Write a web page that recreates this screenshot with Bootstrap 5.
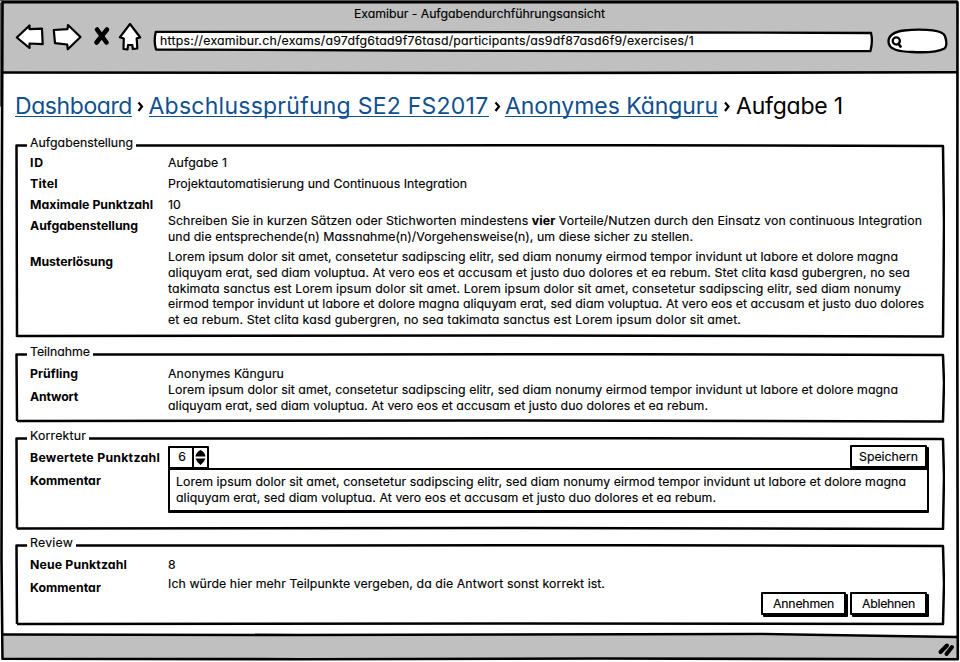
<!DOCTYPE html>
<html lang="de">
<head>
<meta charset="utf-8">
<title>Examibur - Aufgabendurchführungsansicht</title>
<link href="https://cdn.jsdelivr.net/npm/bootstrap@5.3.0/dist/css/bootstrap.min.css" rel="stylesheet">
<style>
html,body{height:662px;overflow:hidden}
body{font:12.3px/16px Inter,"Open Sans",sans-serif;font-feature-settings:"cv11";color:#000;background:#fff;-webkit-text-stroke:.15px}
.fit{white-space:nowrap;display:inline-block}
.ln{display:block;width:max-content;white-space:nowrap}
.browser{width:960px;height:662px;display:flow-root}
.sketch-lines{left:0;top:0;pointer-events:none;z-index:3;-webkit-text-stroke:0}
.chrome-bar{height:71px;margin:2px 2px 0 3px;background:#c0c0c0}
.win-title{height:24px;line-height:24px;padding:0 2px 0 0}
.address{position:relative;z-index:4;margin:8px 0 0 157px;height:14px;line-height:14px}
.page-body{height:562px;padding:21px 15px 0 12px;margin:0 3px}
.foot-bar{height:23px;background:#c0c0c0;margin:0 2px 0 4px}
.crumbs{font-size:23px;line-height:28px;height:28px;-webkit-text-stroke:0}
.crumbs a{color:#105090;text-decoration:none;border-bottom:1px solid #105090;height:23px;line-height:24px;display:block}
.crumb-here{line-height:24px}
.panel{position:relative;width:930px;padding:0 15px}
.frame{position:absolute;inset:0;width:100%;height:100%}
.frame path{fill:none;stroke:#000;stroke-width:2.5px;vector-effect:non-scaling-stroke;stroke-linejoin:round}
.panel-title{position:absolute;left:12px;top:-9px;background:#fff;padding:0 3px;height:18px;line-height:16px}
.item{display:flex;position:relative}
.item dt{width:138px;flex:none;font-weight:700;line-height:16px;-webkit-text-stroke:0}
.item dd{margin:0;flex:1 1 auto}
.lorem{line-height:15.75px}
.p1{height:194px;padding-top:11px;margin-top:22px}
.p2{height:70px;padding-top:13px;margin-top:15px}
.p3{height:93px;padding-top:8px;margin-top:14px}
.p4{height:82px;padding-top:13px;margin-top:14px}
.h21{height:21px}.h16{height:16px}.h19{height:19px}.h23{height:23px}
.push4{padding-top:4px}.push5{padding-top:5px}.push7{padding-top:7px}
.sk-btn{font:inherit;border:2px solid #000;background:#fff;border-radius:1px;box-shadow:2px 2px 0 #000;padding:0;height:23px;line-height:18px;text-align:center;color:#000;-webkit-text-stroke:inherit}
.w78{width:77px;margin-right:3px}.w85{width:85px;margin-right:4px}
.stepper{width:41px;height:23px;margin-top:1px;border:2px solid #000;border-radius:1px}
.stepper-num{width:24px;line-height:17px;border-right:2px solid #000;text-align:center;padding-left:2px}
.comment-box{border:2px solid #000;border-bottom-width:3px;width:761px;height:45px;padding:4px 6px;border-radius:1px}
</style>
<script src="https://cdn.jsdelivr.net/npm/bootstrap@5.3.0/dist/js/bootstrap.bundle.min.js"></script>
</head>
<body>
<div class="browser position-relative">
<header class="chrome-bar">
  <div class="win-title text-center"><span class="fit" data-w="251">Examibur - Aufgabendurchführungsansicht</span></div>
  <div class="d-flex">
    <div class="address"><span class="fit" data-w="534">https://examibur.ch/exams/a97dfg6tad9f76tasd/participants/as9df87asd6f9/exercises/1</span></div>
  </div>
</header>
<main class="page-body">
  <nav class="crumbs d-flex align-items-start">
    <a href="#"><span class="fit" data-w="117">Dashboard</span></a>
    <svg width="16.500" height="24"><path d="M6.500 8.500 10 12.500 6.500 17" fill="none" stroke="#000" stroke-width="2.200"/></svg>
    <a href="#"><span class="fit" data-w="340">Abschlussprüfung SE2 FS2017</span></a>
    <svg width="16.500" height="24"><path d="M6.500 8.500 10 12.500 6.500 17" fill="none" stroke="#000" stroke-width="2.200"/></svg>
    <a href="#"><span class="fit" data-w="213">Anonymes Känguru</span></a>
    <svg width="18" height="24"><path d="M7 8.500 10.500 12.500 7 17" fill="none" stroke="#000" stroke-width="2.200"/></svg>
    <span class="fit crumb-here" data-w="107">Aufgabe 1</span>
  </nav>

  <section class="panel p1">
    <svg class="frame" viewBox="0 0 930 195" preserveAspectRatio="none"><path d="M2 194 1.500 1.500 300 1.500 600 1.200 928 2 929 80 928 193.500 500 192.500 2 193"/></svg>
    <div class="panel-title"><span class="fit" data-w="103">Aufgabenstellung</span></div>
    <dl class="m-0">
      <div class="item h21"><dt><span class="fit" data-w="14">ID</span></dt><dd><span class="fit" data-w="59">Aufgabe 1</span></dd></div>
      <div class="item h21"><dt><span class="fit" data-w="28">Titel</span></dt><dd><span class="fit" data-w="299">Projektautomatisierung und Continuous Integration</span></dd></div>
      <div class="item h16"><dt><span class="fit" data-w="123">Maximale Punktzahl</span></dt><dd><span class="fit" data-w="13">10</span></dd></div>
      <div class="item mb-1"><dt class="push5"><span class="fit" data-w="108">Aufgabenstellung</span></dt><dd><span class="ln" data-w="754">Schreiben Sie in kurzen Sätzen oder Stichworten mindestens <b>vier</b> Vorteile/Nutzen durch den Einsatz von continuous Integration</span><span class="ln" data-w="525">und die entsprechende(n) Massnahme(n)/Vorgehensweise(n), um diese sicher zu stellen.</span></dd></div>
      <div class="item"><dt class="push5"><span class="fit" data-w="83">Musterlösung</span></dt><dd class="lorem"><span class="ln" data-w="730">Lorem ipsum dolor sit amet, consetetur sadipscing elitr, sed diam nonumy eirmod tempor invidunt ut labore et dolore magna</span><span class="ln" data-w="742">aliquyam erat, sed diam voluptua. At vero eos et accusam et justo duo dolores et ea rebum. Stet clita kasd gubergren, no sea</span><span class="ln" data-w="733">takimata sanctus est Lorem ipsum dolor sit amet. Lorem ipsum dolor sit amet, consetetur sadipscing elitr, sed diam nonumy</span><span class="ln" data-w="756">eirmod tempor invidunt ut labore et dolore magna aliquyam erat, sed diam voluptua. At vero eos et accusam et justo duo dolores</span><span class="ln" data-w="573">et ea rebum. Stet clita kasd gubergren, no sea takimata sanctus est Lorem ipsum dolor sit amet.</span></dd></div>
    </dl>
  </section>

  <section class="panel p2">
    <svg class="frame" viewBox="0 0 930 70" preserveAspectRatio="none"><path d="M2 68 1.500 1.500 300 1.500 600 1.200 928 2 929 30 928 68.500 500 67.500 2 68"/></svg>
    <div class="panel-title"><span class="fit" data-w="60">Teilnahme</span></div>
    <dl class="m-0">
      <div class="item h16"><dt><span class="fit" data-w="48">Prüfling</span></dt><dd><span class="fit" data-w="116">Anonymes Känguru</span></dd></div>
      <div class="item"><dt class="push7"><span class="fit" data-w="48">Antwort</span></dt><dd class="lorem"><span class="ln" data-w="730">Lorem ipsum dolor sit amet, consetetur sadipscing elitr, sed diam nonumy eirmod tempor invidunt ut labore et dolore magna</span><span class="ln" data-w="540">aliquyam erat, sed diam voluptua. At vero eos et accusam et justo duo dolores et ea rebum.</span></dd></div>
    </dl>
  </section>

  <section class="panel p3">
    <svg class="frame" viewBox="0 0 930 93" preserveAspectRatio="none"><path d="M2 91.500 1.500 1.500 300 1.500 600 1.200 928 2 929 40 928 92 500 91 2 91.500"/></svg>
    <div class="panel-title"><span class="fit" data-w="56">Korrektur</span></div>
    <dl class="m-0">
      <div class="item h23"><dt class="push5"><span class="fit" data-w="130">Bewertete Punktzahl</span></dt>
        <dd class="d-flex justify-content-between"><div class="stepper d-flex"><span class="stepper-num">6</span><svg width="13" height="19"><path d="M1.500 8.500Q2 4 6.500 2 11 4 11.500 8.500ZM1.500 10.500H11.500Q10 14.500 6.500 17 3 14.500 1.500 10.500Z"/></svg></div>
        <button class="sk-btn w78"><span class="fit" data-w="59">Speichern</span></button></dd></div>
      <div class="item"><dt class="push5"><span class="fit" data-w="71">Kommentar</span></dt><dd><div class="comment-box lorem"><span class="ln" data-w="730">Lorem ipsum dolor sit amet, consetetur sadipscing elitr, sed diam nonumy eirmod tempor invidunt ut labore et dolore magna</span><span class="ln" data-w="540">aliquyam erat, sed diam voluptua. At vero eos et accusam et justo duo dolores et ea rebum.</span></div></dd></div>
    </dl>
  </section>

  <section class="panel p4">
    <svg class="frame" viewBox="0 0 930 83" preserveAspectRatio="none"><path d="M2 81 1.500 1.500 300 1.500 600 1.200 928 2 929 40 928 81 500 80.500 2 81"/></svg>
    <div class="panel-title"><span class="fit" data-w="43">Review</span></div>
    <dl class="m-0">
      <div class="item h19"><dt><span class="fit" data-w="97">Neue Punktzahl</span></dt><dd><span class="fit" data-w="7">8</span></dd></div>
      <div class="item h16"><dt class="push4"><span class="fit" data-w="71">Kommentar</span></dt><dd><span class="fit" data-w="437">Ich würde hier mehr Teilpunkte vergeben, da die Antwort sonst korrekt ist.</span></dd></div>
    </dl>
    <div class="d-flex justify-content-end position-relative"><button class="sk-btn w85"><span class="fit" data-w="61">Annehmen</span></button><button class="sk-btn w78"><span class="fit" data-w="53">Ablehnen</span></button></div>
  </section>
</main>
<footer class="foot-bar"></footer>

<svg class="sketch-lines position-absolute" width="960" height="662" fill="none" stroke="#000" stroke-linejoin="round" stroke-linecap="round">
  <path stroke="#555" stroke-width="1.500" d="M.800 3V106M0 .500H957"/>
  <path stroke-width="2.600" d="M2.500 2.200H957.500L957.300 330 957.800 659.300 600 658.500 300 659.200 2.500 658.700 1.500 560 2 330 1.800 200 2.500 2"/>
  <path stroke-width="2.600" d="M3 72.500 480 73 957 72.300"/>
  <path stroke="none" fill="#fff" d="M700 633 955.500 633V637L700 635Z"/>
  <path stroke-width="2.600" d="M3 634.500 300 635 760 634 956 637"/>
  <g fill="#fff" stroke-width="2.200">
    <path d="M16.800 37.500 29.500 25.500V29.200L42 28.700 42.700 44.200 29.500 43.500V48Z"/>
    <path d="M53.800 30 67.500 29.200 68 25 80.500 37 67.800 49.300 67.200 44.500 55 43.200Z"/>
    <path d="M130 24 140.300 37.500 136.700 38.300 137.300 48.500 132.800 49 132.300 45H128L127.500 49.500 123.500 49 123.800 38.500 119.800 37.300Z"/>
  </g>
  <path stroke-width="4.600" d="M97 29.500 106.500 42.500M107 29.500 96.500 42.500"/>
  <path fill="#fff" stroke-width="2.300" d="M155.800 31.800 400 32 690 32.500 871 33Q873 41 870.500 51L600 51.200 400 50.500 156 49.500Q153.500 41 155.800 31.800Z"/>
  <path fill="#fff" stroke-width="2.300" d="M888.500 41C889 34 896 31.500 904 30.500 918 29 938 29.300 943.500 34 946.500 37 947.500 46 944.500 48.500 938 52 925 52.700 912 52 900 51.700 888 50 888.500 41Z"/>
  <circle cx="896.300" cy="41" r="3.600" stroke-width="2.300"/><path stroke-width="2.800" d="M898.500 44 900.500 46.500"/>
  <path stroke-width="4" d="M940.500 652 947 645.500M946.500 654 952 647"/>
</svg>
</div>
<script>
// Spread the letters of each text run over its intended width.
document.querySelectorAll('[data-w]').forEach(function(el){
  var w=el.getBoundingClientRect().width,n=el.textContent.length;
  el.style.letterSpacing=((el.dataset.w-w)/n)+'px';
});
</script>
</body>
</html>
